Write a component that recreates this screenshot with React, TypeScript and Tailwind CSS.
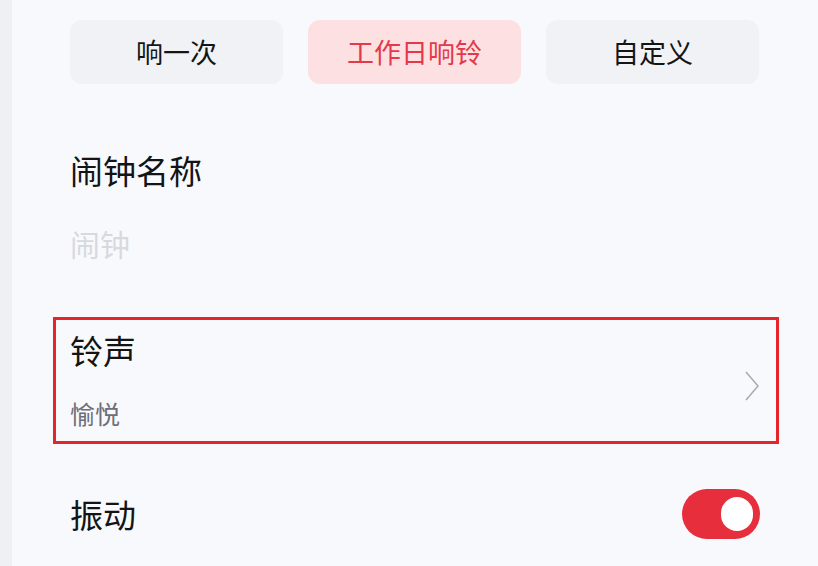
import { useState } from 'react';

const modes = ['响一次', '工作日响铃', '自定义'];

export default function App() {
  const [mode, setMode] = useState(1);
  const [vibrate, setVibrate] = useState(true);

  return (
    <div
      className="flex h-[566px] w-[818px] overflow-hidden bg-[#eef0f3]"
      style={{ fontFamily: '"Noto Sans CJK SC", "Noto Sans", sans-serif' }}
    >
      <div className="ml-[12px] flex-1 bg-[#f8f9fc]">
        <div className="flex gap-[25px] pl-[58px] pt-[20px]">
          {modes.map((m, i) => (
            <button
              key={m}
              onClick={() => setMode(i)}
              className={
                i === mode
                  ? 'flex h-[64px] w-[213px] items-center justify-center rounded-[12px] bg-[#fde1e2] text-[27px] text-[#e5384a]'
                  : 'flex h-[64px] w-[213px] items-center justify-center rounded-[12px] bg-[#f1f2f5] text-[27px] text-[#151515]'
              }
            >
              {m}
            </button>
          ))}
        </div>

        <div className="pl-[58px] pt-[66px]">
          <div className="text-[33px] leading-[40px] text-[#141414]">闹钟名称</div>
          <div className="mt-[33px] text-[30px] leading-[40px] text-[#d8d9dd]">闹钟</div>
        </div>

        <div className="ml-[41px] mr-[39px] mt-[54px] flex h-[127px] items-center border-[3px] border-[#e4262c] pl-[14px] pr-[16px]">
          <div className="flex flex-1 flex-col">
            <div className="-mt-[4px] text-[33px] leading-[40px] text-[#141414]">铃声</div>
            <div className="mt-[28px] text-[25px] leading-[30px] text-[#6e6e78]">愉悦</div>
          </div>
          <svg width="16" height="32" viewBox="0 0 16 32" fill="none" className="mt-[10px]">
            <path d="M2 2 L14 16 L2 30" stroke="#a9a9b0" strokeWidth="1.5" />
          </svg>
        </div>

        <div className="flex items-center pl-[58px] pr-[58px] pt-[45px]">
          <div className="flex-1 text-[33px] leading-[40px] text-[#141414]">振动</div>
          <button
            onClick={() => setVibrate(!vibrate)}
            className={
              vibrate
                ? 'flex h-[50px] w-[78px] items-center justify-end rounded-full bg-[#e62e3d] pr-[7px]'
                : 'flex h-[50px] w-[78px] items-center justify-start rounded-full bg-[#d5d6da] pl-[7px]'
            }
          >
            <span className="h-[34px] w-[32px] rounded-full bg-white" />
          </button>
        </div>
      </div>
    </div>
  );
}
